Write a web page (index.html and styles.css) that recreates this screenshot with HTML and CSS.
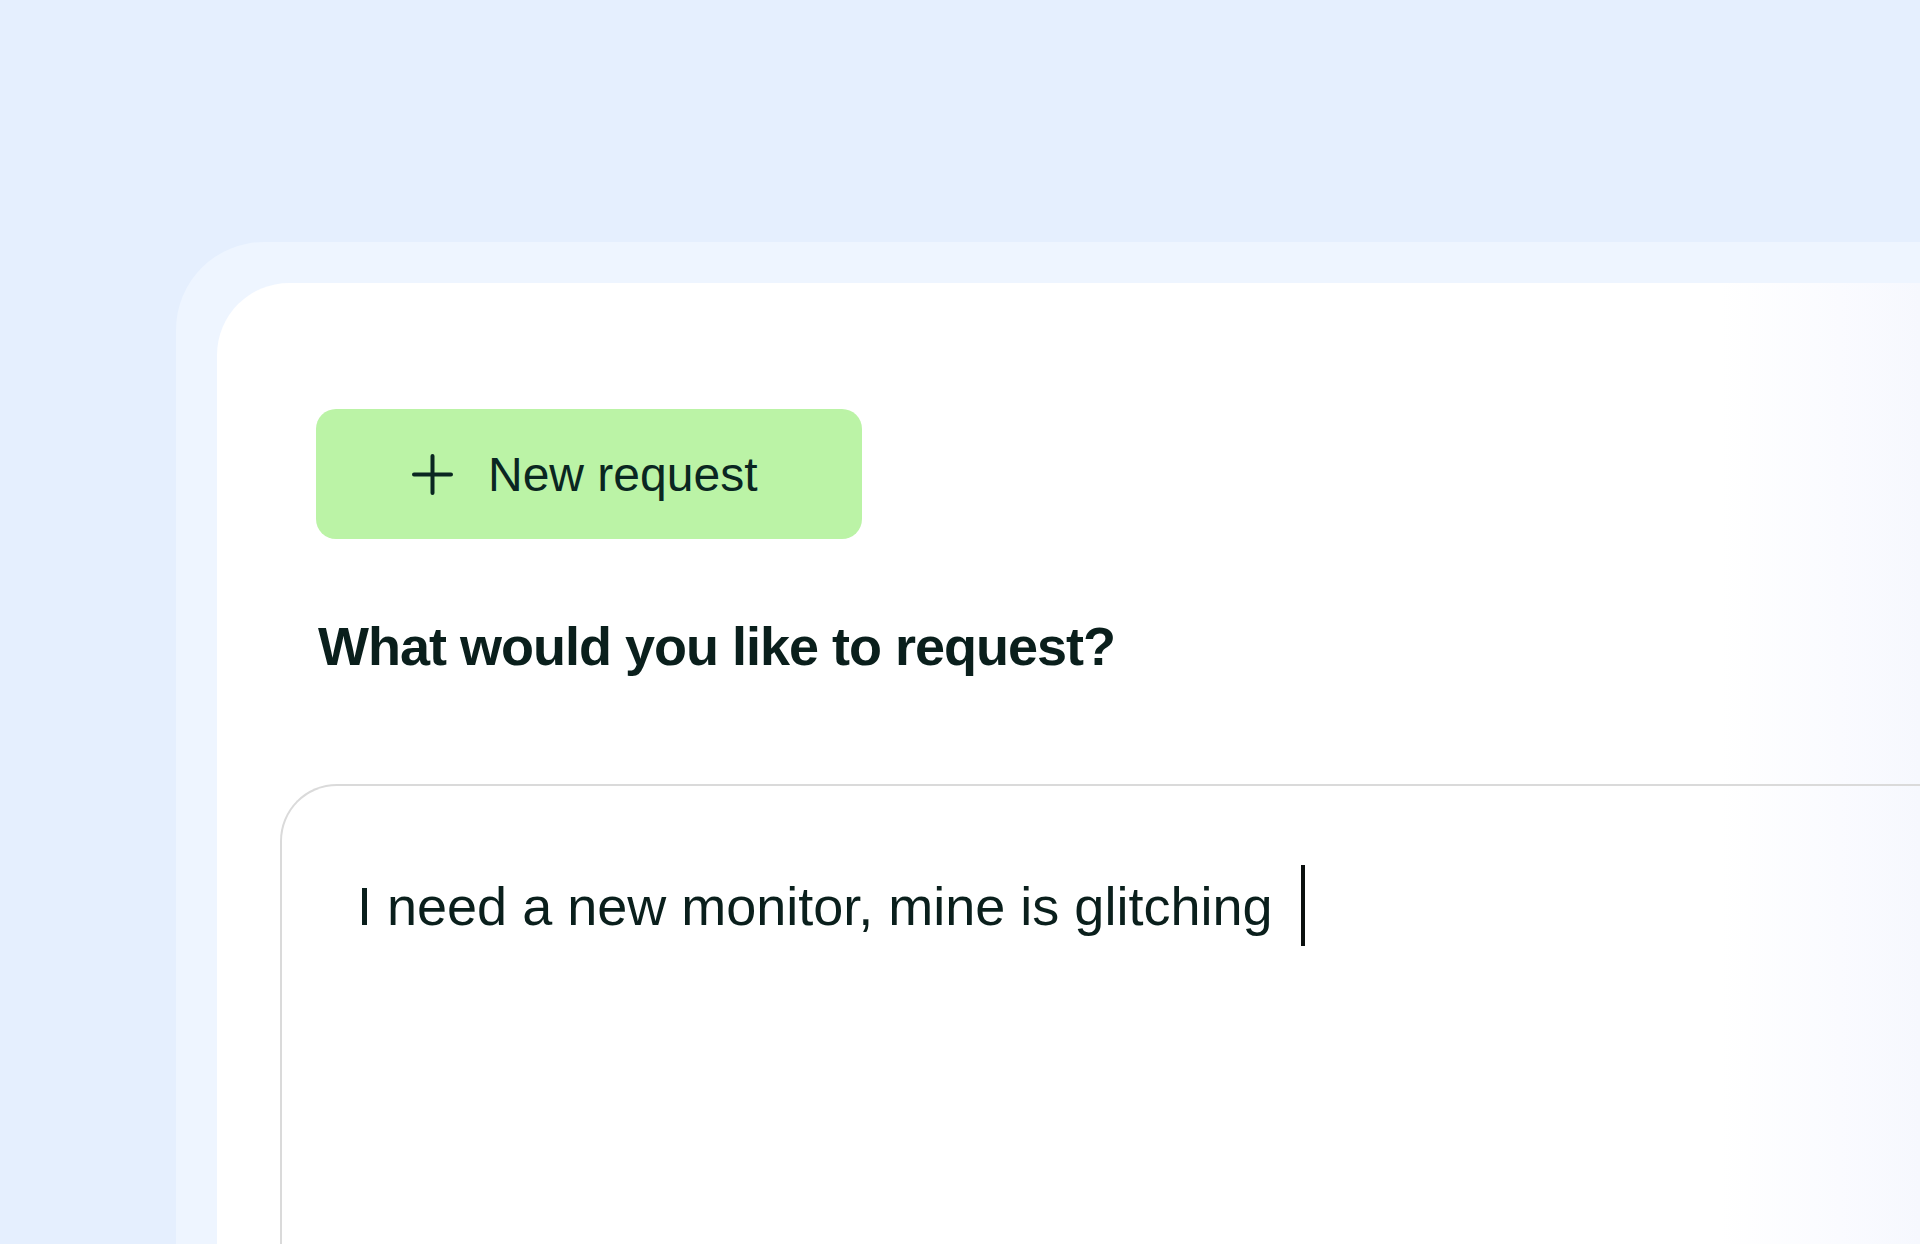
FILE: index.html
```html
<!DOCTYPE html>
<html>
<head>
  <meta charset="utf-8">
  <link rel="stylesheet" href="styles.css">
</head>
<body>
  <div class="frame">
    <div class="card">
      <div class="content">
        <button class="new-request">
          <svg class="plus" width="41" height="41" viewBox="0 0 41 41">
            <path d="M20.5 2 V39 M2 20.5 H39" stroke="currentColor" stroke-width="4" stroke-linecap="round" fill="none"/>
          </svg>
          <span>New request</span>
        </button>

        <h2 class="question">What would you like to request?</h2>
      </div>

      <div class="prompt-box">
        <div class="prompt-line">
          <span class="prompt-text">I need a new monitor, mine is glitching</span>
          <span class="caret"></span>
        </div>
      </div>
    </div>
  </div>
</body>
</html>
```

FILE: styles.css
```css
html, body {
  margin: 0;
  height: 100%;
  overflow: hidden;
}

body {
  display: flex;
  flex-direction: column;
  background: #e5effe;
  font-family: "Liberation Sans", Arial, sans-serif;
  color: #0a1f1c;
}

.frame {
  flex: 1;
  display: flex;
  margin: 242px 0 0 176px;
  padding: 41px 0 0 41px;
  background: #eef5ff;
  border-top-left-radius: 88px;
  min-height: 0;
}

.card {
  flex: 1;
  display: flex;
  flex-direction: column;
  padding: 126px 0 0 63px;
  border-top-left-radius: 72px;
  background: linear-gradient(to right, #ffffff 1720px, #fafbff 1840px, #f6f8fe 1920px) fixed;
}

.content {
  padding-left: 36px;
}

.new-request {
  display: flex;
  align-items: center;
  gap: 35px;
  width: 546px;
  height: 130px;
  padding: 0 0 0 96px;
  border: none;
  border-radius: 20px;
  background: #bbf3a6;
  color: #0a2621;
  font-family: inherit;
  font-size: 48px;
  cursor: pointer;
}

.plus {
  display: block;
  flex-shrink: 0;
}

.question {
  margin: 75px 0 0 2px;
  font-size: 54px;
  line-height: 64px;
  font-weight: 700;
  letter-spacing: -1px;
}

.prompt-box {
  flex: 1;
  margin-top: 106px;
  padding: 79px 0 0 75px;
  border: 2px solid #dadada;
  border-right: none;
  border-bottom: none;
  border-top-left-radius: 57px;
  background: linear-gradient(to right, #ffffff 1720px, #fafbff 1840px, #f6f8fe 1920px) fixed;
}

.prompt-line {
  display: flex;
  align-items: center;
}

.prompt-text {
  font-size: 54px;
  line-height: 64px;
}

.caret {
  width: 4px;
  height: 81px;
  margin-left: 28px;
  background: #0a0f0e;
}
```
